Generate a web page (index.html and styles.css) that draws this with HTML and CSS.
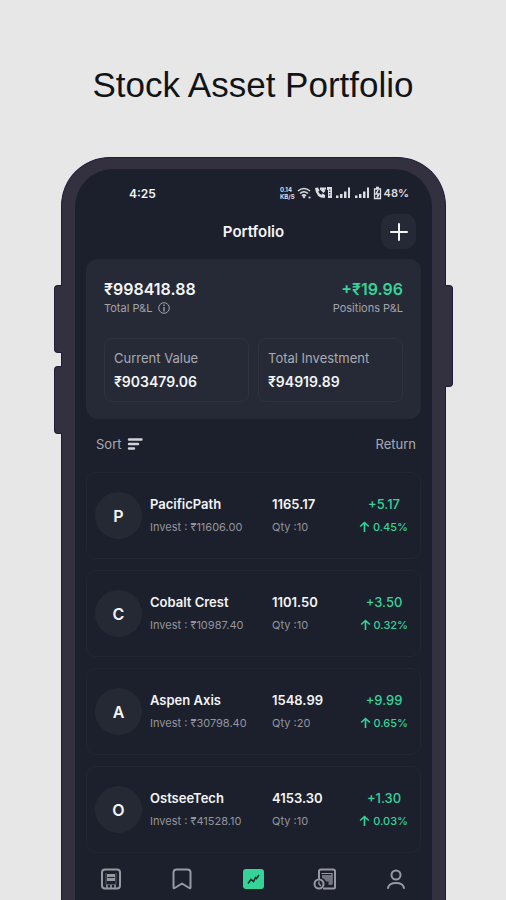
FILE: index.html
```html
<!DOCTYPE html>
<html lang="en">
<head>
<meta charset="utf-8">
<meta name="viewport" content="width=device-width, initial-scale=1">
<title>Stock Asset Portfolio</title>
<link rel="stylesheet" href="styles.css">
</head>
<body>
<h1 class="headline">Stock Asset Portfolio</h1>
<div class="phone">
  <span class="side-key key-up"></span>
  <span class="side-key key-down"></span>
  <span class="side-key key-power"></span>
  <div class="screen">
    <div class="status">
      <span class="clock">4:25</span>
      <div class="indicators">
        <span class="speed"><span>0.14</span><span>KB/S</span></span>
        <svg width="15" height="14" viewBox="0 0 15 14" fill="none" stroke="currentColor" stroke-width="1.6"><path d="M1 5Q7 0 13 5M3 7.5Q7 4 11 7.5M5 9.8Q7 8 9 9.8"/><path d="M7 9.500l1.500 1.500L7 12.500 5.500 11z" fill="currentColor" stroke="none"/><path d="M11.500 11.500h2"/></svg>
        <svg width="19" height="14" viewBox="0 0 19 14" fill="currentColor"><path d="M1 2l3-.5 1.500 3-1.300 1.300q1 2 3 3l1.500-1.200 2.600 1.600-.6 2.800Q2 12 1 2z"/><path d="M6 1.500h6v2h-1.500l.8 1.500L9.500 7 6 3.500z"/><path d="M13 1h5v11h-4V4h-1z"/><path d="M15 4h1.500M15 6.500h1.500M15 9h1.500" stroke="#1c202c"/></svg>
        <svg width="17" height="14" viewBox="0 0 17 14" fill="currentColor"><path d="M1 9.500h2.500V12H1zM5 8h2.500v4H5zM9 5.500h2.500V12H9zM13 1.500h2V12h-2z"/></svg>
        <svg width="17" height="14" viewBox="0 0 17 14" fill="currentColor"><path d="M1 9.500h2.500V12H1zM5 8h2.500v4H5zM9 5.500h2.500V12H9zM13 1.500h2V12h-2z"/></svg>
        <svg width="9" height="14" viewBox="0 0 9 14" fill="none" stroke="currentColor" stroke-width="1.300"><path d="M3 1.500h3M1.500 3h6v9.500h-6z"/><path d="M5 4L3 8h3l-2 3.500" stroke-width="1.600"/></svg>
        <span>48%</span>
      </div>
    </div>
    <header class="titlebar">
      <h2>Portfolio</h2>
      <button class="add" type="button" aria-label="Add"><svg width="20" height="20" viewBox="0 0 20 20" stroke="currentColor" stroke-width="2" stroke-linecap="round"><path d="M10 2v16M2 10h16"/></svg></button>
    </header>
    <section class="summary">
      <div class="totals">
        <div>
          <div class="amount">₹998418.88</div>
          <div class="caption">Total P&amp;L <svg width="12" height="12" viewBox="0 0 12 12" fill="none" stroke="currentColor"><circle cx="6" cy="6" r="5.300"/><path d="M6 5v4.500M6 2.500v1.500" stroke-width="1.300"/></svg></div>
        </div>
        <div class="positions">
          <div class="amount gain">+₹19.96</div>
          <div class="caption">Positions P&amp;L</div>
        </div>
      </div>
      <div class="tiles">
        <div class="tile"><div class="tile-name">Current Value</div><div class="tile-value">₹903479.06</div></div>
        <div class="tile"><div class="tile-name">Total Investment</div><div class="tile-value">₹94919.89</div></div>
      </div>
    </section>
    <div class="listbar">
      <button class="sort" type="button">Sort <svg width="16" height="12" viewBox="0 0 16 12" stroke="currentColor" stroke-width="2.400" stroke-linecap="round"><path d="M2 1.500h12.500M2 6h9M2 10.500h5"/></svg></button>
      <span>Return</span>
    </div>
    <ul class="holdings">
      <li class="holding">
        <span class="avatar">P</span>
        <div><div class="name">PacificPath</div><div class="detail">Invest : ₹11606.00</div></div>
        <div><div class="name">1165.17</div><div class="detail">Qty :10</div></div>
        <div class="return"><div class="change">+5.17</div><div class="percent"><svg class="arrow" viewBox="0 0 11 12"><path d="M5.500 11V1.500M1.200 5.500l4.300-4 4.300 4"/></svg>0.45%</div></div>
      </li>
      <li class="holding">
        <span class="avatar">C</span>
        <div><div class="name">Cobalt Crest</div><div class="detail">Invest : ₹10987.40</div></div>
        <div><div class="name">1101.50</div><div class="detail">Qty :10</div></div>
        <div class="return"><div class="change">+3.50</div><div class="percent"><svg class="arrow" viewBox="0 0 11 12"><path d="M5.500 11V1.500M1.200 5.500l4.300-4 4.300 4"/></svg>0.32%</div></div>
      </li>
      <li class="holding">
        <span class="avatar">A</span>
        <div><div class="name">Aspen Axis</div><div class="detail">Invest : ₹30798.40</div></div>
        <div><div class="name">1548.99</div><div class="detail">Qty :20</div></div>
        <div class="return"><div class="change">+9.99</div><div class="percent"><svg class="arrow" viewBox="0 0 11 12"><path d="M5.500 11V1.500M1.200 5.500l4.300-4 4.300 4"/></svg>0.65%</div></div>
      </li>
      <li class="holding">
        <span class="avatar">O</span>
        <div><div class="name">OstseeTech</div><div class="detail">Invest : ₹41528.10</div></div>
        <div><div class="name">4153.30</div><div class="detail">Qty :10</div></div>
        <div class="return"><div class="change">+1.30</div><div class="percent"><svg class="arrow" viewBox="0 0 11 12"><path d="M5.500 11V1.500M1.200 5.500l4.300-4 4.300 4"/></svg>0.03%</div></div>
      </li>
    </ul>
    <nav class="tabs">
      <a href="#orders" aria-label="Orders"><svg width="24" height="24" viewBox="0 0 24 24" fill="none" stroke="currentColor" stroke-width="2"><rect x="3" y="2.500" width="18" height="19" rx="3"/><path d="M8 7h8v7H8z" fill="currentColor" stroke="none"/><path d="M8.500 10.500h7" stroke="#1c202c" stroke-width="1"/><path d="M7 6v11.500h10V6" stroke-width="1" opacity=".5"/><path d="M8 18v3M12 18v3M16 18v3" stroke-width="1.600"/></svg></a>
      <a href="#watchlist" aria-label="Watchlist"><svg width="24" height="24" viewBox="0 0 24 24" fill="none" stroke="currentColor" stroke-width="2" stroke-linejoin="round"><path d="M3.500 20.500V5.500q0-3 3-3h11q3 0 3 3v15q0 1.200-1.200.5L12 16.500 4.700 21q-1.200.7-1.200-.5z"/></svg></a>
      <a class="current" href="#portfolio" aria-label="Portfolio"><svg width="24" height="24" viewBox="0 0 24 24"><rect x="2" y="2" width="21" height="20" rx="3" fill="currentColor"/><path d="M7 16.500l3-4 2.500 2 2-4 1 1 2.500-3.500" fill="none" stroke="#17302f" stroke-width="1.600"/></svg></a>
      <a href="#history" aria-label="History"><svg width="26" height="24" viewBox="0 0 26 24" fill="none" stroke="currentColor" stroke-width="2"><path d="M7 12V4.500q0-2 2-2h12q2 0 2 2v16q0 1-1 1H11"/><path d="M10 8h9.500v10h-3v-3.500H14q-1-3-4-3.500z" fill="currentColor" stroke="none" opacity=".7"/><path d="M9.500 6.500h10.500v11" stroke-width="1.200"/><circle cx="7" cy="17" r="4.500"/><path d="M7 14.500V17l2 2" stroke-width="1.400"/></svg></a>
      <a href="#profile" aria-label="Profile"><svg width="24" height="24" viewBox="0 0 24 24" fill="none" stroke="currentColor" stroke-width="2" stroke-linecap="round"><circle cx="12" cy="8" r="4.500"/><path d="M4 21q1-5 8-5t8 5"/></svg></a>
    </nav>
  </div>
</div>
</body>
</html>
```
FILE: styles.css
```css
* { box-sizing: border-box; }
body {
  margin: 0;
  min-height: 100vh;
  display: flex;
  flex-direction: column;
  background: #e7e7e7;
  color: #f3f4f6;
  font-family: Inter, "Liberation Sans", sans-serif;
}
h1, h2, ul { margin: 0; padding: 0; font-weight: inherit; }
.headline {
  padding: 65px 0 52px;
  text-align: center;
  color: #111417;
  font: 35px/40px "Liberation Sans", sans-serif;
}
.phone {
  position: relative;
  flex: 1;
  display: flex;
  margin: 0 60px 0 61px;
  padding: 11px 13px 0;
  background: #33303f;
  border: solid #201b39;
  border-width: 1px 1px 0;
  border-radius: 49px 49px 0 0;
}
.side-key {
  position: absolute;
  width: 8px;
  height: 68px;
  background: #33303f;
  border: 1px solid #201b39;
}
.key-up, .key-down { left: -8px; border-right: 0; border-radius: 4px 0 0 4px; }
.key-up { top: 127px; }
.key-down { top: 208px; }
.key-power { right: -8px; top: 127px; height: 102px; border-left: 0; border-radius: 0 4px 4px 0; }
.screen {
  flex: 1;
  min-width: 0;
  padding: 15px 11px 0;
  background: #1c202c;
  border-radius: 38px 38px 0 0;
}
.status {
  display: flex;
  align-items: center;
  justify-content: space-between;
  height: 18px;
  padding: 0 12px 0 43px;
  font-size: 12px;
  font-weight: 600;
}
.indicators { display: flex; align-items: center; gap: 2px; color: #dcdde0; font-size: 11px; }
.speed { display: grid; font-size: 6px; line-height: 7px; font-weight: 700; }
.titlebar {
  display: grid;
  grid-template-columns: 1fr auto 1fr;
  align-items: center;
  margin: 12px 0 10px;
}
h2 { grid-column: 2; font-size: 15px; line-height: 20px; font-weight: 600; }
button { padding: 0; border: 0; background: none; color: inherit; font: inherit; }
.add {
  display: grid;
  place-items: center;
  justify-self: end;
  width: 35px;
  height: 35px;
  margin-right: 5px;
  border-radius: 11px;
  background: #252935;
}
.summary { padding: 20px 18px 17px; border-radius: 12px; background: #262a36; }
.totals { display: flex; justify-content: space-between; }
.amount { font-size: 16px; line-height: 20px; font-weight: 600; }
.positions { text-align: right; }
.gain, .change, .percent { color: #36d399; }
.caption {
  display: flex;
  align-items: center;
  gap: 6px;
  color: #a1a4ac;
  font-size: 11px;
  line-height: 18px;
}
.positions .caption { justify-content: flex-end; }
.tiles { display: grid; grid-template-columns: 1fr 1fr; gap: 9px; margin-top: 21px; }
.tile { padding: 8px 9px 6px; border: 1px solid #2e323d; border-radius: 8px; }
.tile-name { color: #a8abb3; font-size: 13px; line-height: 22px; white-space: nowrap; }
.tile-value { font-size: 14px; line-height: 26px; font-weight: 600; }
.listbar {
  display: flex;
  align-items: center;
  justify-content: space-between;
  height: 53px;
  padding: 0 5px 3px 10px;
  color: #a8abb3;
  font-size: 13px;
}
.sort { display: flex; align-items: center; gap: 5px; }
.sort svg { color: #d0d2d7; }
.holdings { display: grid; gap: 11px; list-style: none; }
.holding {
  display: grid;
  grid-template-columns: 47px 1fr 80px 48px;
  column-gap: 8px;
  align-items: center;
  height: 87px;
  padding: 0 12px 0 8px;
  border: 1px solid #222631;
  border-radius: 10px;
  white-space: nowrap;
}
.avatar {
  display: grid;
  place-items: center;
  height: 47px;
  border-radius: 50%;
  background: #252934;
  font-size: 16px;
  font-weight: 600;
}
.name { font-size: 13px; line-height: 22px; font-weight: 600; }
.detail { color: #92959e; font-size: 11px; line-height: 24px; }
.return { text-align: center; }
.change { font-size: 13px; line-height: 22px; font-weight: 500; }
.percent {
  display: flex;
  align-items: center;
  justify-content: flex-end;
  gap: 3px;
  font-size: 11px;
  line-height: 24px;
  font-weight: 500;
}
.arrow { flex: none; width: 11px; height: 12px; fill: none; stroke: currentColor; stroke-width: 1.6; }
.tabs {
  display: grid;
  grid-template-columns: repeat(5, 1fr);
  height: 46px;
  margin: 0 -11px;
  padding-top: 6px;
}
.tabs a { display: grid; place-items: center; color: #9699a2; }
.tabs .current { color: #36d399; }
```
